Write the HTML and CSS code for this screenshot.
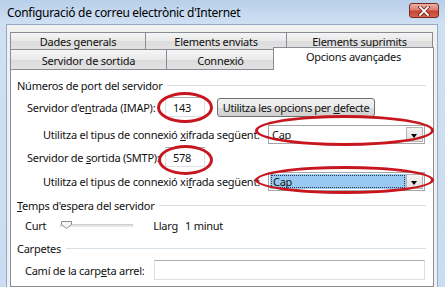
FILE: index.html
```html
<!DOCTYPE html>
<html lang="ca">
<head>
    <meta charset="UTF-8">
    <title>Configuració de correu electrònic d'Internet</title>
    <link rel="stylesheet" href="styles.css">
</head>
<body>
<div class="window">
    <div class="titlebar">
        <span class="title">Configuració de correu electrònic d'Internet</span>
        <span class="close">
            <svg width="12" height="10" viewBox="0 0 12 10">
                <path d="M2 1 L10 9 M10 1 L2 9" stroke="#6b1f17" stroke-width="3.4" stroke-linecap="square"/>
                <path d="M2 1 L10 9 M10 1 L2 9" stroke="#ffffff" stroke-width="1.8" stroke-linecap="square"/>
            </svg>
        </span>
    </div>
    <div class="client">
        <div class="tabrow top-row">
            <div class="tab t1">Dades generals</div>
            <div class="tab t2">Elements enviats</div>
            <div class="tab t3">Elements suprimits</div>
        </div>
        <div class="tabrow bottom-row">
            <div class="tab t4">Servidor de sortida</div>
            <div class="tab t5">Connexió</div>
            <div class="tab t6 active">Opcions avançades</div>
        </div>
        <div class="panel">
            <div class="group first">
                <span>Números de port del servidor</span>
                <span class="rule"></span>
            </div>
            <div class="row port-row imap">
                <span class="label port-label">Servidor d'e<u>n</u>trada (IMAP):</span>
                <span class="textbox port">143</span>
                <span class="button">Utilitza les opcions per&nbsp;<u>d</u>efecte</span>
            </div>
            <div class="row combo-row combo1">
                <span class="label combo-label">Utilitza el tipus de connexió <u>x</u>ifrada següent:</span>
                <span class="combo">
                    <span class="combo-text">Cap</span>
                    <span class="combo-arrow"></span>
                </span>
            </div>
            <div class="row port-row smtp">
                <span class="label port-label">Servidor de <u>s</u>ortida (SMTP):</span>
                <span class="textbox port">578</span>
            </div>
            <div class="row combo-row combo2">
                <span class="label combo-label">Utilitza el tipus de connexió xi<u>f</u>rada següent:</span>
                <span class="combo">
                    <span class="combo-text selected"><span class="focus">Cap</span></span>
                    <span class="combo-arrow"></span>
                </span>
            </div>
            <div class="group timeout">
                <span><u>T</u>emps d'espera del servidor</span>
                <span class="rule"></span>
            </div>
            <div class="row slider-row">
                <span class="label">Curt</span>
                <span class="slider">
                    <span class="track"></span>
                    <svg class="thumb" width="11" height="8" viewBox="0 0 11 8">
                        <path d="M0.5 0.5 H10.5 V3.5 L5.5 7.5 L0.5 3.5 Z" fill="#f4f4f4" stroke="#8d8d8d"/>
                    </svg>
                </span>
                <span class="label">Llarg</span>
                <span class="label minutes">1 minut</span>
            </div>
            <div class="group folders">
                <span>Carpetes</span>
                <span class="rule"></span>
            </div>
            <div class="row folder-row">
                <span class="label folder-label">Camí de la carp<u>e</u>ta arrel:</span>
                <span class="textbox folder"></span>
            </div>

            <span class="mark m1"></span>
            <span class="mark m2"></span>
            <span class="mark m3"></span>
            <span class="mark m4"></span>
        </div>
    </div>
</div>
</body>
</html>
```

FILE: styles.css
```css
body {
    margin: 0;
    font-family: "Noto Sans", "Open Sans", sans-serif;
    font-size: 11px;
    letter-spacing: -0.25px;
    color: #111;
    white-space: nowrap;
}
.window {
    width: 445px;
    height: 287px;
    overflow: hidden;
    display: flex;
    flex-direction: column;
    background: linear-gradient(#b9cfea, #cfe0f3 24px, #cadcf1);
}
.titlebar {
    height: 24px;
    flex-shrink: 0;
    display: flex;
    align-items: center;
    justify-content: space-between;
    padding: 0 6px 0 7px;
}
.title {
    font-size: 12px;
    letter-spacing: -0.3px;
    color: #000;
    margin-top: 1px;
}
.close {
    width: 28px;
    height: 13px;
    margin-top: -3px;
    border: 1px solid #7a2a20;
    border-radius: 3px;
    background: linear-gradient(#eab1a5, #dc7f6f 45%, #c44432 55%, #d4654f);
    display: flex;
    align-items: center;
    justify-content: center;
}
.client {
    flex: 1;
    margin: 0 7px 0 6px;
    padding: 7px 3px 0 3px;
    background: #f0f0f0;
    border: 1px solid #94aac6;
    border-bottom: none;
    display: flex;
    flex-direction: column;
}

/* tabs */
.tabrow {
    display: flex;
    flex-shrink: 0;
}
.top-row {
    height: 17px;
}
.bottom-row {
    height: 20px;
    align-items: flex-start;
}
.tab {
    box-sizing: border-box;
    height: 100%;
    border: 1px solid #898c95;
    border-bottom: none;
    background: linear-gradient(#f5f5f5, #e9e9e9 50%, #dcdcdc 51%, #e2e2e2);
    display: flex;
    align-items: center;
    justify-content: center;
    margin-left: -1px;
}
.t1 { width: 136px; margin-left: 0; }
.t2 { width: 142px; }
.t3 { width: 147px; }
.t4 { width: 157px; margin-left: 0; }
.t5 { width: 109px; }
.t6 { width: 161px; }
.tab.active {
    height: 23px;
    margin-top: -2px;
    margin-left: -2px;
    background: #fff;
    position: relative;
    z-index: 1;
    align-items: flex-start;
    padding-top: 2px;
}
.top-row .tab {
    padding-top: 1px;
}
.bottom-row .tab {
    padding-top: 1px;
}

/* panel */
.panel {
    flex: 1;
    position: relative;
    background: #fff;
    border: 1px solid #898c95;
    padding: 7px 0 0 0;
    display: flex;
    flex-direction: column;
}
.group {
    height: 16px;
    display: flex;
    align-items: center;
    padding-left: 6px;
}
.group .rule {
    flex: 1;
    height: 1px;
    margin: 1px 7px 0 5px;
    background: #d5dfe5;
}
.timeout { margin-top: 6px; }
.folders { margin-top: 5px; }

.row {
    height: 20px;
    display: flex;
    align-items: center;
    padding-left: 16px;
}
.port-label { width: 138px; }
.imap { margin-top: 4px; }
.smtp { margin-top: 3px; }
.combo1 { margin-top: 7px; }
.combo2 { margin-top: 4px; }
.combo-label {
    width: 225px;
    padding-left: 16px;
}
.slider-row {
    margin-top: 2px;
    padding-left: 14px;
}
.folder-row {
    margin-top: 4px;
    padding-left: 14px;
}
.folder-label { width: 129px; }

.textbox {
    box-sizing: border-box;
    height: 20px;
    background: #fff;
    border: 1px solid #dbdfe6;
    border-top-color: #abadb3;
    display: flex;
    align-items: center;
}
.port {
    width: 40px;
    padding-left: 7px;
}
.folder {
    width: 271px;
}
.button {
    box-sizing: border-box;
    width: 158px;
    height: 19px;
    margin-left: 12px;
    border: 1px solid #707070;
    border-radius: 3px;
    background: linear-gradient(#f2f2f2, #ebebeb 50%, #dddddd 51%, #cfcfcf);
    display: flex;
    align-items: center;
    justify-content: center;
    letter-spacing: -0.35px;
}

.combo {
    box-sizing: border-box;
    width: 157px;
    height: 19px;
    border: 1px solid #a5a5a5;
    background: #fff;
    display: flex;
    padding: 1px;
}
.combo-text {
    flex: 1;
    display: flex;
    align-items: center;
    padding-left: 2px;
}
.combo-text.selected {
    background: #99c9f2;
    padding: 1px;
}
.focus {
    flex: 1;
    align-self: stretch;
    display: flex;
    align-items: center;
    padding-left: 1px;
    border: 1px dotted #2a3a4a;
}
.combo-arrow {
    width: 15px;
    border: 1px solid #b4b4b4;
    background: linear-gradient(#f4f4f4, #e0e0e0);
    position: relative;
}
.combo-arrow::after {
    content: "";
    position: absolute;
    left: 4px;
    top: 6px;
    border-left: 3.5px solid transparent;
    border-right: 3.5px solid transparent;
    border-top: 4px solid #000;
}

.slider {
    width: 80px;
    height: 20px;
    margin: 0 14px 0 13px;
    position: relative;
}
.track {
    position: absolute;
    left: 1px;
    right: 6px;
    top: 9px;
    height: 1px;
    border: 1px solid #cfcfcf;
    border-bottom-color: #e8e8e8;
    background: #e4e4e4;
}
.thumb {
    position: absolute;
    left: 2px;
    top: 6px;
}
.minutes { margin-left: 7px; }

/* red annotation rings */
.mark {
    position: absolute;
    box-sizing: border-box;
    border: 3px solid #c8161f;
    border-radius: 50%;
}
.m1 { left: 146px; top: 22px; width: 56px; height: 31px; }
.m2 { left: 244px; top: 45px; width: 179px; height: 31px; }
.m3 { left: 147px; top: 75px; width: 55px; height: 30px; }
.m4 { left: 244px; top: 96px; width: 179px; height: 28px; }
```
